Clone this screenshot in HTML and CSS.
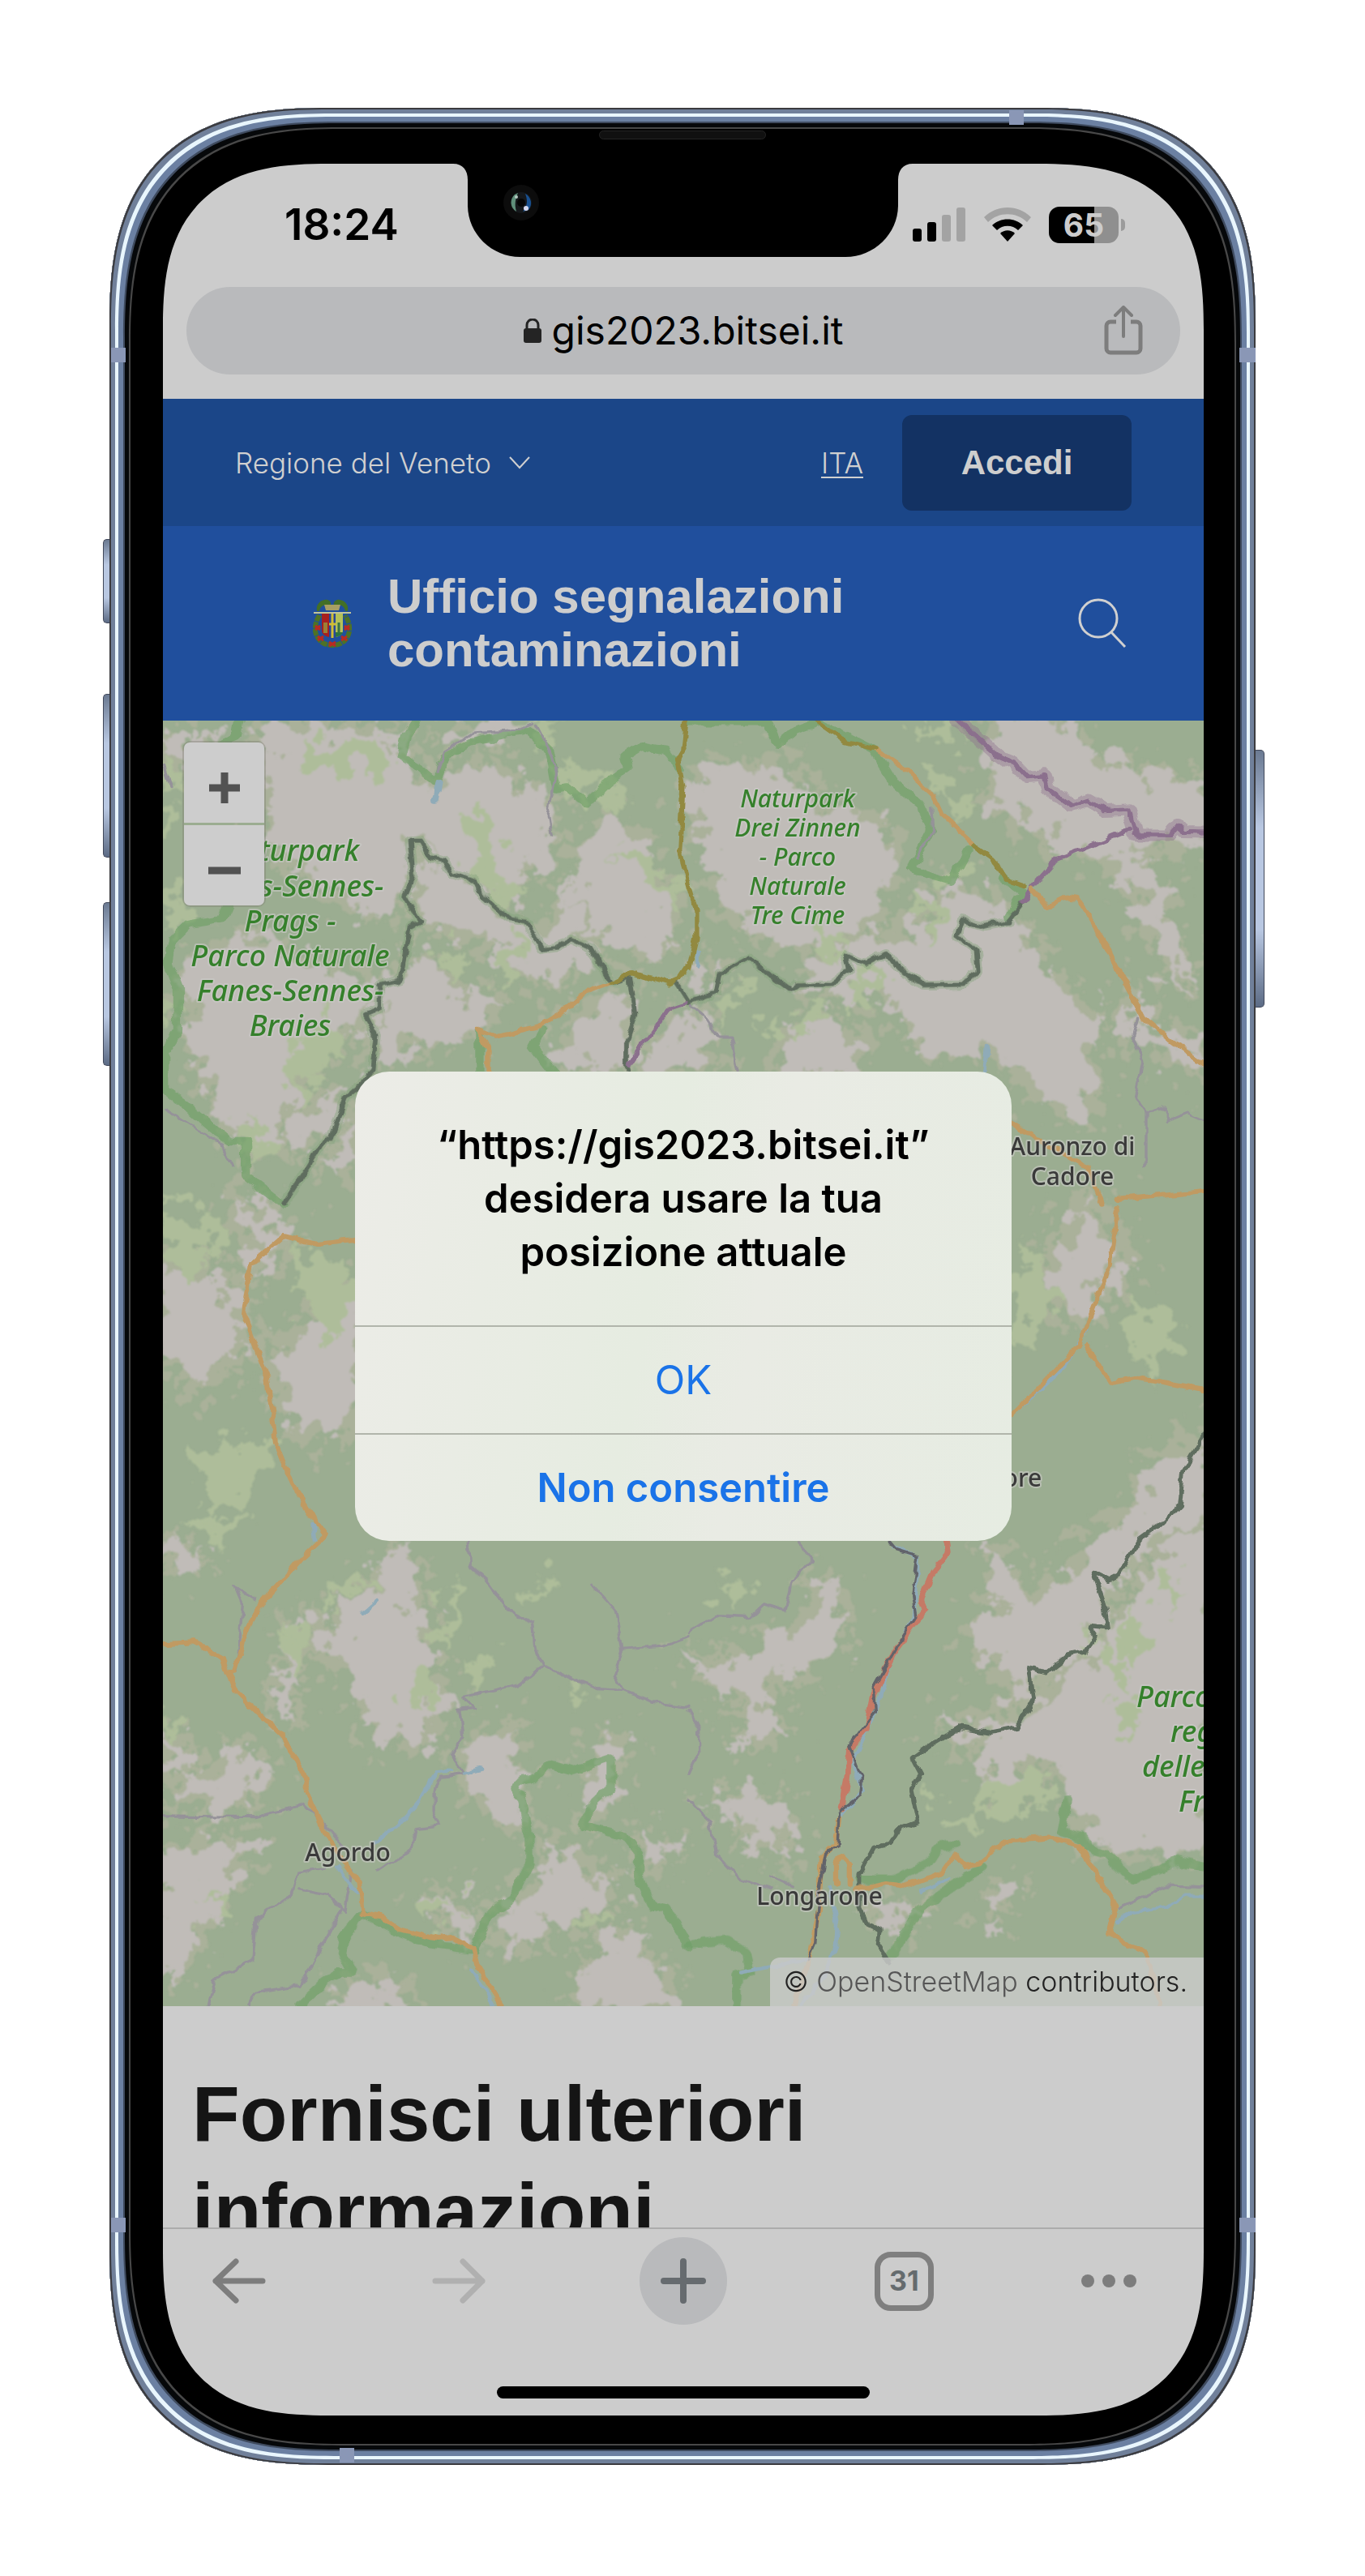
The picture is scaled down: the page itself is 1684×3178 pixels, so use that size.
FILE: index.html
```html
<!DOCTYPE html>
<html lang="it">
<head>
<meta charset="utf-8">
<meta name="viewport" content="width=device-width, initial-scale=1">
<title>Ufficio segnalazioni contaminazioni</title>
<link rel="stylesheet" href="styles.css">
</head>
<body>
<div class="phone">
  <span class="key key-mute"></span>
  <span class="key key-up"></span>
  <span class="key key-down"></span>
  <span class="key key-power"></span>
  <span class="band band-left band-high"></span>
  <span class="band band-right band-high"></span>
  <span class="band band-left band-low"></span>
  <span class="band band-right band-low"></span>
  <span class="band band-top"></span>
  <span class="band band-bottom"></span>
  <span class="speaker"></span>

  <div class="screen">
    <svg class="notch" viewBox="0 0 567 115" aria-hidden="true">
      <path d="M0 0C12 0 18 8 18 20V51C18 86 47 115 83 115H484C520 115 549 86 549 51V20C549 8 555 0 567 0Z" fill="#000"/>
      <circle cx="84" cy="48" r="22" fill="#0c0c0c"/>
      <circle cx="84" cy="48" r="13" fill="#15181b"/>
      <path d="M76 38a13 13 0 0 0 2 21c-2-7-2-14 2-23z" fill="#5f8f7a"/>
      <path d="M89 37a13 13 0 0 1 4 20l-7 2c6-7 6-14 3-22z" fill="#184f8f"/>
      <circle cx="84" cy="48" r="5" fill="#050505"/>
      <circle cx="78" cy="41" r="2" fill="#b5c9c0"/>
      <circle cx="90" cy="55" r="3" fill="#d5d8ee"/>
    </svg>

    <div class="status">
      <time class="clock">18:24</time>
      <div class="indicators">
        <svg width="66" height="42" viewBox="0 0 66 42" aria-hidden="true">
          <rect x="0" y="26" width="11" height="16" rx="3"/>
          <rect x="18" y="18" width="11" height="24" rx="3"/>
          <rect x="36" y="9" width="11" height="33" rx="3" fill="#a3a3a3"/>
          <rect x="54" y="0" width="11" height="42" rx="3" fill="#a3a3a3"/>
        </svg>
        <svg width="58" height="42" viewBox="0 0 58 42" aria-hidden="true">
          <path d="M0 12C16-4 42-4 58 12L53 18C40 5 18 5 5 18Z" fill="#a3a3a3"/>
          <path d="M10 22C20 12 38 12 48 22L42 28C35 21 23 21 16 28Z"/>
          <path d="M20 32C25 27 33 27 38 32L29 42Z"/>
        </svg>
        <div class="battery">65</div>
      </div>
    </div>

    <div class="address">
      <svg width="22" height="30" viewBox="0 0 22 30" aria-hidden="true">
        <rect x="0" y="12" width="22" height="18" rx="3" fill="#242424"/>
        <path d="M4 14V8a7 7 0 0 1 14 0v6" fill="none" stroke="#242424" stroke-width="3"/>
      </svg>
      <span class="url">gis2023.bitsei.it</span>
      <button class="share" type="button" aria-label="Condividi">
        <svg width="48" height="62" viewBox="0 0 48 62" fill="none" stroke="#7d7d7d" stroke-width="5" stroke-linecap="round" stroke-linejoin="round">
          <path d="M15 20H8a5 5 0 0 0-5 5V53a5 5 0 0 0 5 5H40a5 5 0 0 0 5-5V25a5 5 0 0 0-5-5H33" stroke-linecap="butt"/>
          <path d="M24 38V3M14 12L24 2L34 12" stroke-width="4"/>
        </svg>
      </button>
    </div>

    <header>
      <div class="slim">
        <a class="region" href="#">Regione del Veneto
          <svg width="26" height="16" viewBox="0 0 26 16" fill="none" stroke="#d0d0d0" stroke-width="2"><path d="M1 1L13 14L25 1"/></svg>
        </a>
        <a class="lang" href="#">ITA</a>
        <button class="login" type="button">Accedi</button>
      </div>
      <div class="brand">
        <svg class="crest" width="48" height="60" viewBox="0 0 48 60" aria-hidden="true">
          <path d="M8 20C6 24 2 30 3 40C5 50 12 57 24 57C36 57 43 50 45 40C46 30 42 24 40 20" fill="none" stroke="#4d7226" stroke-width="6" stroke-dasharray="8 1"/>
          <path d="M3 33l6 5m-6 0l6-5M39 33l6 5m-6 0l6-5M6 46l7 5m-7 0l7-5M35 46l7 5m-7 0l7-5M20 53l8 5m-8 0l8-5" stroke="#b92a22" stroke-width="3"/>
          <path d="M5 15C3 5 12 0 18 1C23 3 23 7 21 8C15 6 9 8 8 15ZM43 15C45 5 36 0 30 1C25 3 25 7 27 8C33 6 39 8 40 15Z" fill="#426f27"/>
          <path d="M14 7h20l-2 7H16Z" fill="#a89f64"/>
          <path d="M1 17H47" stroke="#c2c499" stroke-width="2"/>
          <path d="M11 18h9v29c-5-1-9-4-9-8Z" fill="#a8201f"/>
          <path d="M13 29h5v13h-5z" fill="#9c7f35"/>
          <path d="M20 18h8v29l-4 2-4-2z" fill="#28469a"/>
          <path d="M24 18v30M20 31h8" stroke="#d0bd35" stroke-width="3"/>
          <path d="M28 18h9v21c0 4-4 7-9 8Z" fill="#b5c158"/>
          <path d="M28 41h9c-1 3-4 5-9 6z" fill="#2d7540"/>
          <path d="M32 29v13" stroke="#397342" stroke-width="3"/>
        </svg>
        <div class="title">Ufficio segnalazioni<br>contaminazioni</div>
        <button class="search" type="button" aria-label="Cerca">
          <svg width="60" height="62" viewBox="0 0 60 62" fill="none" stroke="#d0d0d0" stroke-width="3"><circle cx="25" cy="25" r="23"/><path d="M41 42L58 60"/></svg>
        </button>
      </div>
    </header>

    <section class="map" aria-label="Mappa">
      <svg class="tiles" viewBox="201 889 1284 1586">
        <defs>
          <filter id="rough" x="-5%" y="-5%" width="110%" height="110%">
            <feTurbulence type="fractalNoise" baseFrequency="0.035" numOctaves="5" seed="7" result="n"/>
            <feDisplacementMap in="SourceGraphic" in2="n" scale="80" xChannelSelector="R" yChannelSelector="G" result="d"/>
            <feGaussianBlur in="d" stdDeviation="1"/>
          </filter>
          <filter id="scrub" x="-5%" y="-5%" width="110%" height="110%">
            <feTurbulence type="fractalNoise" baseFrequency="0.05" numOctaves="4" seed="12" result="n"/>
            <feDisplacementMap in="SourceGraphic" in2="n" scale="130" xChannelSelector="R" yChannelSelector="G" result="d"/>
            <feGaussianBlur in="d" stdDeviation="1"/>
          </filter>
          <filter id="wobble" x="-5%" y="-5%" width="110%" height="110%">
            <feTurbulence type="fractalNoise" baseFrequency="0.06" numOctaves="2" seed="3" result="n"/>
            <feDisplacementMap in="SourceGraphic" in2="n" scale="10" xChannelSelector="R" yChannelSelector="G"/>
          </filter>
          <g id="rocks">
            <g transform="translate(190 880) scale(.4209 .3571)">
              <path d="M330 40L700 60 730 190 820 300 930 180 1080 250 1150 300 1150 440 1080 560 1000 620 940 560 860 540 800 480 750 430 740 620 690 680 640 700 560 620 440 560 330 400Z"/>
              <path d="M290 780L640 960 620 1050 520 1100 480 1180 400 1300 380 1420 330 1500 270 1480 200 1400 180 1280 130 1200 100 1000 90 900 180 800Z"/>
              <path d="M780 500L940 600 1080 720 1160 810 1220 600 1270 820 1200 930 1090 920 1050 830 960 760 900 780 790 700Z"/>
              <path d="M1270 430L1340 380 1450 480 1530 700 1480 830 1400 820 1300 740 1230 600ZM750 850L830 860 850 960 1000 1000 900 1130 760 1120 680 1200 640 1240 650 1000ZM1280 1010L1380 960 1380 1230 1260 1230 1180 1180ZM1420 1230L1560 1050 1568 1230Z"/>
              <path d="M900 30L1100 30 1040 70 930 80 850 130ZM30 90L200 120 100 170 30 150ZM420 1400L560 1300 500 1450 420 1500ZM500 1560L590 1400 590 1568Z"/>
            </g>
            <g transform="translate(850 880) scale(.4209 .3571)">
              <path d="M60 200L160 180 330 210 360 340 540 350 580 480 560 640 500 740 440 780 250 780 120 700 100 560 40 430 0 370 0 260Z"/>
              <path d="M890 30L1100 30 1130 140 1280 200 1530 270 1530 460 1300 460 1200 520 1280 560 1330 650 1360 780 1470 950 1440 860 1400 640 1290 470 1080 480 1060 380 980 360 900 320 900 220 890 120Z"/>
              <path d="M720 620L830 600 870 680 940 700 980 740 960 850 1040 880 1110 960 1110 1010 1170 1030 1170 1180 1190 1330 1150 1390 1070 1340 1000 1310 980 1240 930 1180 700 1150 640 1080 600 960 500 960 380 960 330 940 450 820 600 760 700 740Z"/>
              <path d="M300 1100L400 1060 500 1130 500 1190 460 1240 270 1240ZM1290 980L1330 1080 1450 1120 1530 1180 1530 1230 1300 1110ZM0 1030L60 1080 70 1200 0 1240ZM20 880L80 880 60 950 20 960Z"/>
            </g>
            <g transform="translate(190 1880) scale(.4209 .3954)">
              <path d="M700 80L750 80 750 220 800 330 780 440 840 540 820 660 740 690 620 610 620 520 560 400 500 420 480 340 530 270 640 200Z"/>
              <path d="M10 70L130 80 90 130 10 110ZM10 640L110 720 100 790 10 700ZM40 850L150 800 260 690 310 760 300 850 200 870ZM10 1030L100 1000 270 1010 280 1050 200 1110 130 1290 70 1400 10 1400Z"/>
              <path d="M940 680L1050 640 1020 720 1080 790 1050 830 1080 930 1000 900 930 820ZM1160 1000L1220 1040 1370 1140 1300 1190 1160 1240 1050 1320 1000 1290 1050 1180 1160 1100ZM1420 980L1500 980 1510 1060 1440 1040ZM1240 1504L1270 1360 1380 1260 1420 1350 1480 1410 1510 1504ZM540 1504L600 1440 710 1430 700 1504ZM780 1160L900 1170 930 1300 880 1290 870 1200ZM1270 900L1300 800 1280 690 1370 680 1340 850 1290 930Z"/>
              <path d="M360 480L420 320 440 290 400 480 390 600Z"/>
            </g>
            <g transform="translate(850 1880) scale(.4209 .3954)">
              <path d="M0 420L60 450 200 400 330 320 380 260 370 190 430 190 440 390 360 380 310 500 280 460 210 510 220 600 290 660 150 660 190 600 190 510 110 530Z"/>
              <path d="M870 110L910 110 1030 250 1130 180 1160 70 1200 60 1290 0 1380 0 1300 100 1250 170 1190 150 1220 310 1170 320 1180 390 1050 460 1000 450 1010 550 940 530 920 420 860 420 840 310 880 310 890 250 930 290Z"/>
              <path d="M1000 600L1100 480 1200 420 1300 260 1400 60 1530 40 1530 1000 1430 1000 1290 1010 1170 980 1130 860 1080 740 970 700 970 800 880 830 900 730 740 620 960 640Z"/>
              <path d="M60 850L200 850 300 900 270 930 290 1070 220 960 150 1020 190 930ZM530 1200L660 1200 640 1250 540 1240ZM870 1160L940 1150 900 1240Z"/>
            </g>
            <path d="M201 1570L280 1590 300 1660 240 1700 201 1650ZM340 1680L438 1600 438 1740 380 1760ZM1340 1490L1380 1560 1330 1620 1300 1560ZM1420 1830L1485 1780 1485 1880 1400 1890ZM300 1480L340 1520 320 1560Z"/>
          </g>
          <g id="meadows">
            <g transform="translate(190 880) scale(.4209 .3571)">
              <path d="M450 110L680 110 680 180 450 180ZM940 330L990 380 1000 540 1050 640 1000 640 930 450ZM1300 250L1380 260 1350 340ZM30 180L90 280 60 300ZM400 1180L520 1060 500 1200 420 1320ZM1060 780L1090 840 1040 900ZM1380 480L1480 520 1540 640 1450 600ZM1210 180L1280 230 1230 300ZM860 800L920 880 880 900ZM30 640L80 600 60 780ZM30 300L60 380 30 440ZM30 1000L50 1080 30 1120ZM280 1430L340 1500 300 1568ZM1110 40L1180 40 1150 90Z"/>
            </g>
            <g transform="translate(850 880) scale(.4209 .3571)">
              <path d="M680 180L760 200 740 260ZM770 300L830 320 810 360ZM510 890L570 890 510 1000 480 960ZM340 1000L370 1050 340 1070ZM740 540L790 530 760 580ZM210 1060L250 1060 230 1100ZM380 730L430 820 360 800ZM670 40L780 60 780 100ZM700 640L720 700 710 800ZM130 930L150 980 120 1020Z"/>
            </g>
            <g transform="translate(190 1880) scale(.4209 .3954)">
              <path d="M760 480L810 450 800 540 750 560ZM400 330L450 340 400 480ZM930 420L990 420 960 460ZM120 0L260 0 150 40ZM1210 520L1250 540 1220 550ZM810 1180L870 1190 830 1220ZM170 1180L240 1210 180 1210ZM30 600L80 610 50 640ZM560 190L620 180 540 220ZM850 180L880 300 860 370ZM1250 1240L1290 1240 1260 1260ZM1110 190L1140 180 1120 240Z"/>
            </g>
            <g transform="translate(850 1880) scale(.4209 .3954)">
              <path d="M900 800L1040 820 1020 900 990 860 940 880 860 890ZM680 820L740 890 700 870ZM790 930L830 910 840 950ZM1190 380L1260 400 1250 480ZM90 180L160 200 140 250ZM1300 300L1350 340 1300 420ZM1400 150L1440 200 1400 240ZM1290 560L1320 600 1290 660Z"/>
            </g>
            <path d="M210 1500L260 1520 230 1560ZM380 1560L430 1580 400 1640ZM250 1800L320 1790 280 1850ZM1270 1560L1300 1600 1260 1640ZM1400 1620L1440 1640 1420 1680Z"/>
          </g>
        </defs>
        <rect x="201" y="889" width="1284" height="1586" fill="#9bad91"/>
        <g filter="url(#scrub)" fill="#aab19a" stroke="#aab19a" stroke-width="46" stroke-linejoin="round"><use href="#rocks"/></g>
        <g filter="url(#rough)">
          <use href="#rocks" fill="#c0bcb8" stroke="#c0bcb8" stroke-width="12"/>
          <use href="#meadows" fill="#aebd9a" stroke="#aebd9a" stroke-width="24"/>
        </g>
        <g filter="url(#wobble)" fill="none" stroke-linejoin="round" stroke-linecap="round">
          <!-- nature reserve boundaries -->
          <g stroke="#6fa067" stroke-width="27" stroke-opacity=".65">
            <path transform="translate(190 880) scale(.4209 .3571)" d="M775 20L740 80 725 150 780 190 830 240 850 150 930 100 1100 60 1160 130 1180 260 1210 255 1270 310 1330 240 1390 190 1380 150 1430 115 1500 130 1540 190M250 20L240 80 200 100M215 670L200 710 100 730 50 790 40 860 70 950 70 1100 30 1170 30 1300 90 1350 220 1480 270 1480 270 1600 378 1697M1140 1090L1110 1150 1170 1240M955 1100V1240"/>
            <path transform="translate(850 880) scale(.4209 .3571)" d="M0 30H230L260 110 310 60 380 30 540 125 600 240 680 320 710 400 650 540 770 580 820 470M920 570L980 620 940 700"/>
            <path transform="translate(190 1880) scale(.4209 .3954)" d="M610 1215L560 1280 550 1340 580 1400 545 1400 500 1430 430 1500M610 1215L700 1265 810 1310 940 1330 980 1220 1050 1170 1100 1060 1100 980 1080 860 1055 830 1080 800 1120 790 1160 750 1230 770 1340 730 1340 820 1290 870 1255 940 1380 975 1420 1030 1420 1100 1460 1190 1500 1200 1568 1320"/>
            <path transform="translate(850 1880) scale(.4209 .3954)" d="M500 1110L600 1110 700 1060 730 1010 780 1000M590 1350L680 1200 860 1070M1110 860L1090 960 1150 980 1170 1010 1220 1030 1300 1110 1380 1080 1430 1050 1510 1070M0 1310L110 1300 170 1340 180 1400 140 1410 140 1500"/>
          </g>
          <!-- soft edge along the provincial border -->
          <g stroke="#7fa078" stroke-width="30" stroke-opacity=".4">
            <path transform="translate(190 880) scale(.4209 .3571)" d="M378 1697L450 1568 500 1470 520 1470 560 1330 600 1290 640 1240 650 1110 620 1040 660 1020 660 940 720 925 750 740 780 720 735 630 760 560 750 440 780 440 810 500 850 510 880 555 940 580 960 630 1040 710 1090 720 1140 815 1180 810 1225 780 1280 810 1340 930"/>
            <path transform="translate(850 880) scale(.4209 .3571)" d="M0 1000L80 965 90 900 175 845 250 915 300 958 320 940 415 938 470 890 460 835 520 865 580 830 610 880 690 940 800 938 845 890 840 820 785 770 800 715 860 735 935 720"/>
          </g>
          <!-- minor roads -->
          <g stroke="#959299" stroke-width="8">
            <path transform="translate(190 1880) scale(.4209 .3954)" d="M920 55L925 130 980 180 1040 270 1110 310 1120 390 1140 440 1240 490 1300 515 1380 520 1460 555 1568 570M1285 190L1350 270 1370 390 1490 380 1568 350M1370 390L1350 470 1380 520M1140 440L1070 500 905 540 940 575 895 580 905 660 870 720 910 780 840 790 820 830 820 900 840 940 770 950 760 1010 660 1080M30 910L300 915 440 875 520 960 560 1010M550 1200L430 1440 300 1460 280 1504M500 1075L420 1090 400 1160 300 1230 290 1360 180 1420 160 1504M425 1140L510 1160 560 1210 580 1080M240 460L260 250 240 200 300 235"/>
            <path transform="translate(850 1880) scale(.4209 .3954)" d="M0 340L80 285 180 290 220 250 280 270 300 180 360 110 320 60M1260 1200L1400 1130 1510 1135M240 1100L300 1130M0 860L60 930 80 1030 150 1110 240 1140M0 580L30 640 30 710 0 780"/>
            <path transform="translate(850 880) scale(.4209 .3571)" d="M0 1000L50 1050 90 1120 125 1120 145 1240M1315 1050L1300 1120 1330 1200 1310 1330 1340 1380 1340 1568M1340 1380L1400 1360 1400 1410 1460 1380 1510 1405M710 330L715 410 665 500"/>
            <path transform="translate(190 880) scale(.4209 .3571)" d="M1120 40L1160 130 1180 200 1155 350 1165 420M830 200L850 130 930 70 1060 60 1110 35M30 1370L200 1490 230 1568M30 180L50 260"/>
          </g>
          <!-- rivers and lakes -->
          <g stroke="#8fabb8" stroke-width="11">
            <path transform="translate(190 1880) scale(.4209 .3954)" d="M960 765L910 780M870 770L830 775 780 860 710 950 650 990M540 1070L590 1150M930 1390L1000 1504M465 0L470 50M610 280L655 240"/>
            <path transform="translate(850 1880) scale(.4209 .3954)" d="M600 70L672 105 660 290 585 440 545 590 480 740 510 830 440 920M410 1130L435 1250 430 1320 400 1400 330 1500M150 1400L340 1360M1255 1240L1300 1210 1400 1195 1450 1160 1510 1160M680 1145L760 1110"/>
            <path transform="translate(850 880) scale(.4209 .3571)" d="M875 1150L865 1240M25 820V870"/>
            <path transform="translate(190 880) scale(.4209 .3571)" d="M835 240L825 300" stroke-width="20"/>
            <path d="M1250 1745L1310 1690 1340 1640" stroke-width="5"/>
          </g>
          <!-- provincial and national borders -->
          <g stroke="#5f6d5e" stroke-width="14">
            <path transform="translate(190 880) scale(.4209 .3571)" d="M378 1697L450 1568 500 1470 520 1470 560 1330 600 1290 640 1240 650 1110 620 1040 660 1020 660 940 720 925 750 740 780 720 735 630 760 560 750 440 780 440 810 500 850 510 880 555 940 580 960 630 1040 710 1090 720 1140 815 1180 810 1225 780 1280 810 1340 930 1395 910 1410 1040 1385 1130 1385 1235M1530 930L1568 1000"/>
            <path transform="translate(850 880) scale(.4209 .3571)" d="M0 1000L80 965 90 900 175 845 250 915 300 958 320 940 415 938 470 890 460 835 520 865 580 830 610 880 690 940 800 938 845 890 840 820 785 770 800 715 860 735 935 720 980 650"/>
            <path transform="translate(850 1880) scale(.4209 .3954)" d="M1510 -280L1450 -170 1440 -60 1385 0 1320 50 1260 160 1230 175 1185 150 1220 260 1228 325 1170 320 1190 350 1160 400 1110 410 1045 465 995 450 1010 540 960 635 890 650 790 635 720 680 655 730 680 780 650 830 670 930 620 950 590 1000 540 1010 500 1090 500 1200 520 1250 560 1270 555 1310 590 1370"/>
          </g>
          <g stroke="#8b6f8d">
            <path transform="translate(850 880) scale(.4209 .3571)" stroke-width="42" stroke-opacity=".4" d="M785 20L850 90 910 150 950 170 990 220 1040 215 1050 260 1120 320 1170 300 1220 335 1290 330 1310 420 1410 420 1435 385 1450 410 1520 412"/>
            <path transform="translate(850 880) scale(.4209 .3571)" stroke-width="15" d="M785 20L850 90 910 150 950 170 990 220 1040 215 1050 260 1120 320 1170 300 1220 335 1290 330 1310 420 1410 420 1435 385 1450 410 1520 412M980 650L1005 600 1075 505 1290 405"/>
            <path transform="translate(190 880) scale(.4209 .3571)" stroke-width="13" d="M1390 1220L1430 1150 1510 1020 1560 1000"/>
          </g>
          <!-- main roads -->
          <g stroke="#c09a62" stroke-width="15">
            <path transform="translate(190 880) scale(.4209 .3571)" d="M1340 930L1270 960 1200 1030 1130 1080 1000 1115 950 1090 980 1160 980 1235"/>
            <path transform="translate(850 880) scale(.4209 .3571)" d="M550 125L630 190 715 285 740 350 835 455M1005 605L1050 670 1110 635 1140 640 1190 740 1230 820 1330 1050 1400 1120 1510 1215M945 1415L1020 1470 1170 1568 1210 1700"/>
            <path transform="translate(190 1880) scale(.4209 .3954)" d="M480 0L505 35 430 110 375 180 300 270 270 340 235 460 215 460 200 415 120 370 20 375M220 465L240 520 380 665 430 760 460 870 520 1000 600 1120 610 1215 665 1225 720 1265 830 1295 870 1290 935 1325 945 1370 1020 1504"/>
            <path transform="translate(850 1880) scale(.4209 .3954)" d="M440 920L430 1000 390 1040 385 1110 380 1200 355 1350 310 1500M430 1120V1060L450 1040 470 1060V1130M490 1140L580 1120 640 1130 740 1090 780 1030 810 1070 850 1060 930 990 1060 980 1140 1000 1250 1190 1230 1275 1280 1310 1340 1340 1380 1500"/>
          </g>
          <g stroke="#c09a62" stroke-width="6"><path d="M438 1530L390 1535 350 1525 310 1560 300 1620 330 1700 340 1780 360 1830 392 1880M1250 1745L1330 1660 1370 1560 1378 1490M1340 1660L1370 1705 1400 1700 1485 1715M1378 1480L1485 1470"/></g>
          <g stroke="#92893f" stroke-width="15">
            <path transform="translate(190 880) scale(.4209 .3571)" d="M1560 20L1550 130 1535 160 1550 250 1540 480 1568 600M1568 870L1540 920 1510 935 1400 895 1340 930"/>
            <path transform="translate(850 880) scale(.4209 .3571)" d="M0 600L20 680 20 780 0 880M365 20L460 100 550 125M835 455L890 500 930 575 980 595"/>
          </g>
          <g transform="translate(850 1880) scale(.4209 .3954)">
            <path stroke="#c57a66" stroke-width="18" d="M755 55L760 90 715 150 680 240 690 270 600 400 540 530 520 640 470 700 465 780 450 890"/>
            <path stroke="#62646a" stroke-width="8" d="M590 55L610 80 670 100 655 220 665 290 610 380 540 510 545 590 470 690 505 790 500 850 440 900 435 1000 400 1030 385 1120 375 1220 370 1310 350 1360"/>
          </g>
        </g>
        <g class="park" font-size="36">
          <text x="358" y="1062">Naturpark</text>
          <text x="358" y="1106">Fanes-Sennes-</text>
          <text x="358" y="1149">Prags -</text>
          <text x="358" y="1192">Parco Naturale</text>
          <text x="358" y="1235">Fanes-Sennes-</text>
          <text x="358" y="1278">Braies</text>
        </g>
        <g class="park" font-size="30">
          <text x="984" y="996">Naturpark</text>
          <text x="984" y="1032">Drei Zinnen</text>
          <text x="984" y="1068">- Parco</text>
          <text x="984" y="1104">Naturale</text>
          <text x="984" y="1140">Tre Cime</text>
        </g>
        <g class="park park-edge" font-size="36">
          <text x="1402" y="2106">Parco</text>
          <text x="1444" y="2149">regionale</text>
          <text x="1409" y="2192">delle Dolomiti</text>
          <text x="1454" y="2235">Friulane</text>
        </g>
        <g class="town" font-size="30">
          <text x="1323" y="1425">Auronzo di</text>
          <text x="1323" y="1462">Cadore</text>
          <text x="1234" y="1834">Cadore</text>
          <text x="429" y="2296">Agordo</text>
          <text x="1011" y="2350">Longarone</text>
        </g>
      </svg>
      <div class="zoom">
        <button type="button" aria-label="Ingrandisci"><svg width="40" height="40" viewBox="0 0 40 40" stroke="#525252" stroke-width="9"><path d="M1 20H39M20 1V39"/></svg></button>
        <button type="button" aria-label="Riduci"><svg width="40" height="40" viewBox="0 0 40 40" stroke="#525252" stroke-width="9"><path d="M0 20H40"/></svg></button>
      </div>
      <div class="credit">© <a href="#">OpenStreetMap</a> contributors.</div>
    </section>

    <main class="content"><h1>Fornisci ulteriori informazioni</h1></main>

    <nav class="toolbar" aria-label="Browser">
      <button class="back" type="button" aria-label="Indietro"><svg width="67" height="56" viewBox="0 0 67 56" fill="none" stroke="#7d7d7d" stroke-width="7" stroke-linecap="round" stroke-linejoin="round"><path d="M63 28H5M30 4L5 28L30 52"/></svg></button>
      <button class="forward" type="button" aria-label="Avanti"><svg width="67" height="56" viewBox="0 0 67 56" fill="none" stroke="#b0b0b0" stroke-width="7" stroke-linecap="round" stroke-linejoin="round"><path d="M4 28H62M38 4L62 28L38 52"/></svg></button>
      <button class="new" type="button" aria-label="Nuova scheda"><svg width="56" height="56" viewBox="0 0 56 56" stroke="#666b6f" stroke-width="8" stroke-linecap="round"><path d="M4 28H52M28 4V52"/></svg></button>
      <button class="tabs" type="button" aria-label="Schede aperte">31</button>
      <button type="button" aria-label="Menu"><svg width="68" height="16" viewBox="0 0 68 16" fill="#7d7d7d"><circle cx="8" cy="8" r="8"/><circle cx="34" cy="8" r="8"/><circle cx="60" cy="8" r="8"/></svg></button>
    </nav>
    <div class="home"></div>

    <div class="alert" role="alertdialog" aria-labelledby="ask">
      <p class="ask" id="ask">“https://gis2023.bitsei.it” desidera usare la tua posizione attuale</p>
      <button type="button">OK</button>
      <button class="strong" type="button">Non consentire</button>
    </div>
  </div>
</div>
</body>
</html>
```

FILE: styles.css
```css
* { box-sizing: border-box; }

body {
  margin: 0;
  padding: 133px 135px;
  background: #fff;
  font-family: "Liberation Sans", Arial, sans-serif;
  color: #151515;
}

button {
  margin: 0;
  padding: 0;
  border: 0;
  background: none;
  color: inherit;
  font: inherit;
}

svg { display: block; flex: none; }

/* device */
.phone {
  position: relative;
  padding: 69px 64px 61px 66px;
  border-radius: 216px;
  background: #000;
  box-shadow:
    inset 0 0 0 2px #3b3b3f,
    inset 0 0 0 7px #70809a,
    inset 0 0 0 11px #e9f6fd,
    inset 0 0 0 17px #6b80a2,
    inset 0 0 0 19px #3f4b5f,
    inset 0 0 0 24px #06080a,
    inset 0 0 0 26px #484848;
}

.key {
  position: absolute;
  left: -8px;
  width: 8px;
  border: 1px solid #41485a;
  border-right: 0;
  border-radius: 5px 0 0 5px;
  background: linear-gradient(#6b7a92, #b9c8e2 30%, #b9c8e2 70%, #5c6b85);
}
.key-mute { top: 532px; height: 104px; }
.key-up { top: 723px; height: 202px; }
.key-down { top: 980px; height: 202px; }
.key-power {
  left: auto;
  right: -11px;
  top: 792px;
  width: 11px;
  height: 318px;
  border: 1px solid #41485a;
  border-left: 0;
  border-radius: 0 5px 5px 0;
}

.band { position: absolute; background: #8a97b6; }
.band-left { left: 2px; width: 18px; height: 18px; }
.band-right { right: 0; width: 20px; height: 18px; }
.band-high { top: 296px; }
.band-low { bottom: 287px; }
.band-top { top: 3px; right: 286px; width: 18px; height: 18px; }
.band-bottom { bottom: 3px; left: 284px; width: 18px; height: 18px; }

.speaker {
  position: absolute;
  top: 28px;
  left: 50%;
  width: 206px;
  height: 11px;
  margin-left: -103px;
  border: 1px solid #242424;
  border-radius: 6px;
  background: #101010;
}

.screen {
  position: relative;
  overflow: hidden;
  display: flex;
  flex-direction: column;
  border-radius: 160px;
  background: #ccc;
}

@supports (corner-shape: superellipse(1.4)) {
  .phone { border-radius: 270px; corner-shape: superellipse(1.385); }
  .screen { border-radius: 205px; corner-shape: superellipse(1.42); }
}

.notch {
  position: absolute;
  top: 0;
  left: 50%;
  width: 567px;
  margin-left: -284px;
}

/* status bar */
.status {
  display: flex;
  justify-content: space-between;
  align-items: center;
  height: 152px;
  padding: 0 97px 2px 150px;
}
.clock { font: 600 53px/60px Inter, sans-serif; color: #000; }
.indicators { display: flex; align-items: center; gap: 22px; }
.battery {
  position: relative;
  width: 86px;
  height: 45px;
  margin-right: 8px;
  border-radius: 13px;
  background: linear-gradient(90deg, #000 56px, #8f8f8f 56px);
  color: #ccc;
  font: 700 39px/45px Inter, sans-serif;
  text-align: center;
}
.battery::after {
  content: "";
  position: absolute;
  top: 15px;
  right: -8px;
  width: 5px;
  height: 15px;
  border-radius: 0 5px 5px 0;
  background: #9b9b9b;
}

/* address bar */
.address {
  display: flex;
  align-items: center;
  justify-content: center;
  gap: 13px;
  height: 108px;
  margin: 0 29px 30px;
  border-radius: 54px;
  background: #b9babc;
  position: relative;
}
.url { font: 400 48px/60px Inter, sans-serif; color: #000; }
.share { position: absolute; right: 46px; top: 23px; }

/* site header */
.slim {
  display: flex;
  align-items: center;
  height: 157px;
  padding: 0 89px 0 89px;
  background: #1b4688;
  font: 300 35px/44px Inter, sans-serif;
}
.slim a { color: #d0d0d0; }
.slim .region { display: flex; align-items: center; gap: 22px; margin-right: auto; text-decoration: none; }
.lang { text-decoration-thickness: 2px; text-underline-offset: 4px; }
.login {
  width: 283px;
  height: 118px;
  margin-left: 48px;
  border-radius: 12px;
  background: #133263;
  color: #cecece;
  font: 700 42px/48px "Liberation Sans", Arial, sans-serif;
}
.brand {
  display: flex;
  align-items: center;
  height: 240px;
  padding: 0 95px 0 185px;
  background: #204f9d;
}
.title {
  margin: 0 auto 0 44px;
  color: #cdcdcd;
  font-weight: 700;
  font-size: 60px;
  line-height: 66px;
}

/* map */
.map { position: relative; overflow: hidden; }
.tiles { width: 100%; height: auto; }
.park, .town {
  font-family: "Noto Sans", sans-serif;
  font-weight: 500;
  text-anchor: middle;
  paint-order: stroke;
  stroke: rgba(204, 204, 200, .6);
  stroke-width: 4px;
  stroke-linejoin: round;
}
.park { font-style: italic; fill: #35802b; }
.park-edge { text-anchor: start; }
.town { fill: #3a3a3a; }

.zoom {
  position: absolute;
  top: 27px;
  left: 26px;
  display: grid;
  gap: 3px;
  border-radius: 8px;
  box-shadow: 0 0 0 2px rgba(120, 120, 110, .35);
}
.zoom button {
  display: grid;
  place-items: center;
  width: 99px;
  height: 99px;
  padding-top: 12px;
  border-radius: 7px 7px 0 0;
  background: #cdcdcd;
}
.zoom button + button { border-radius: 0 0 7px 7px; }

.credit {
  position: absolute;
  right: 0;
  bottom: 0;
  padding: 8px 20px 8px 17px;
  border-radius: 12px 0 0 0;
  background: rgba(204, 204, 204, .8);
  color: #222;
  font: 300 34px/44px Inter, sans-serif;
}
.credit a { color: #565656; text-decoration: none; }

/* page content */
.content {
  height: 273px;
  padding: 73px 34px 0 36px;
  overflow: hidden;
}
h1 {
  max-width: 900px;
  margin: 0;
  font-size: 96px;
  line-height: 120px;
}

/* browser toolbar */
.toolbar {
  display: flex;
  justify-content: space-between;
  align-items: center;
  padding: 10px 83px 10px 60px;
  border-top: 2px solid #acacac;
}
.back { width: 90px; }
.forward { width: 73px; }
.new {
  display: grid;
  place-items: center;
  width: 108px;
  height: 108px;
  border-radius: 50%;
  background: #b9babc;
}
.tabs {
  width: 73px;
  height: 73px;
  border: 7px solid #7f7f7f;
  border-radius: 20px;
  color: #656b6e;
  font: 700 34px/58px Inter, sans-serif;
}
.home {
  width: 460px;
  height: 15px;
  margin: 66px auto 21px;
  border-radius: 8px;
  background: #000;
}

/* permission dialog */
.alert {
  position: absolute;
  top: 1120px;
  left: 50%;
  display: flex;
  flex-direction: column;
  width: 810px;
  margin-left: -405px;
  border-radius: 42px;
  overflow: hidden;
  background: linear-gradient(100deg, #ecece7, #e6ece1 45%, #e9ebe4 60%, #e6ece2);
  font: 400 49px/66px Inter, sans-serif;
  text-align: center;
}
.ask {
  margin: 0;
  padding: 58px 90px 57px;
  color: #000;
  font-weight: 600;
}
.alert button {
  height: 133px;
  border-top: 2px solid #b1b5ab;
  color: #1a73e8;
}
.alert .strong { font-weight: 600; }
```
